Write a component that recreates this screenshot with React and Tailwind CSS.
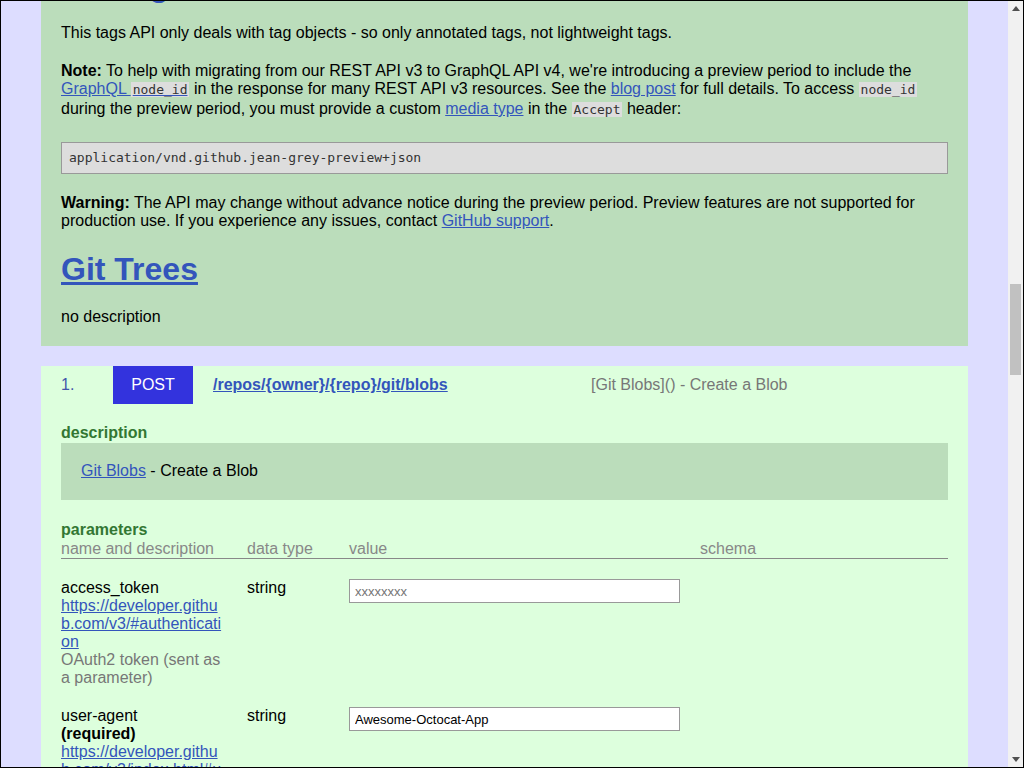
import React from 'react'

const link = 'text-[#3355bb] underline'
const code = "bg-[#dddddd] px-[2px] font-['DejaVu_Sans_Mono',monospace] text-[13px] leading-[20px] text-[#333333]"

const params = [
	{
		name: 'access_token',
		required: false,
		url: 'https://developer.github.com/v3/#authentication',
		note: 'OAuth2 token (sent as a parameter)',
		type: 'string',
		placeholder: 'xxxxxxxx',
		value: '',
	},
	{
		name: 'user-agent',
		required: true,
		url: 'https://developer.github.com/v3/index.html#user-agent-required',
		note: 'User Agent header',
		type: 'string',
		placeholder: '',
		value: 'Awesome-Octocat-App',
	},
]

function Arrow({ down }) {
	return (
		<div className="h-[15px] flex items-center justify-center">
			<svg width="8" height="5" viewBox="0 0 8 5">
				{down ? <path d="M0 0h8L4 5z" fill="#505050" /> : <path d="M0 5h8L4 0z" fill="#505050" />}
			</svg>
		</div>
	)
}

function ParamRow({ p }) {
	return (
		<div className="grid grid-cols-[186px_102px_351px_1fr] pt-[20px]">
			<div className="w-[165px]">
				<div>{p.name}</div>
				{p.required && <div className="font-bold">(required)</div>}
				<a href="#" className={link + ' block break-all'}>{p.url}</a>
				<div className="text-[#777777]">{p.note}</div>
			</div>
			<div>{p.type}</div>
			<div className="pr-[20px]">
				<input
					defaultValue={p.value}
					placeholder={p.placeholder}
					className="block h-[24px] w-[331px] border border-[#999999] bg-white px-[5px] text-[13px] text-black placeholder:text-[#757575] outline-none"
				/>
			</div>
			<div></div>
		</div>
	)
}

export default function App() {
	return (
		<div className="w-[1024px] h-[768px] border border-black flex overflow-hidden font-['Liberation_Sans',Arial,sans-serif] text-[16px] leading-[18px] text-black">
			{/* page */}
			<div className="flex-1 bg-[#ddddff] overflow-hidden px-[40px]">
				{/* Git Tags section (scrolled) */}
				<div className="bg-[#bbddbb] px-[20px] pb-[20px] flow-root">
					<h2 className="mt-[-34px] text-[32px] leading-[37px] font-bold">
						<a href="#" className={link}>Git Tags</a>
					</h2>
					<p className="mt-[20px]">This tags API only deals with tag objects - so only annotated tags, not lightweight tags.</p>
					<p className="mt-[20px]">
						<b>Note:</b> To help with migrating from our REST API v3 to GraphQL API v4, we're introducing a preview period to include the{' '}
						<a href="#" className={link}>GraphQL <code className={code}>node_id</code></a> in the response for many REST API v3 resources. See the{' '}
						<a href="#" className={link}>blog post</a> for full details. To access <code className={code}>node_id</code> during the preview period, you must provide a custom{' '}
						<a href="#" className={link}>media type</a> in the <code className={code}>Accept</code> header:
					</p>
					<pre className="mt-[22px] border border-[#999999] bg-[#dddddd] px-[7px] py-[7px] font-['DejaVu_Sans_Mono',monospace] text-[13px] leading-[16px] text-[#333333]">application/vnd.github.jean-grey-preview+json</pre>
					<p className="mt-[20px]">
						<b>Warning:</b> The API may change without advance notice during the preview period. Preview features are not supported for production use. If you experience any issues, contact{' '}
						<a href="#" className={link}>GitHub support</a>.
					</p>
					<h2 className="mt-[21px] text-[32px] leading-[37px] font-bold">
						<a href="#" className={link}>Git Trees</a>
					</h2>
					<p className="mt-[20px]">no description</p>
				</div>

				{/* endpoint */}
				<div className="mt-[20px] bg-[#ddffdd] px-[20px] pb-[20px]">
					<div className="flex items-center h-[38px]">
						<div className="w-[52px] text-[#4455aa]">1.</div>
						<div className="w-[80px] h-[38px] flex items-center justify-center bg-[#3333dd] text-white">POST</div>
						<a href="#" className={link + ' ml-[20px] w-[378px] font-bold'}>/repos/{'{owner}'}/{'{repo}'}/git/blobs</a>
						<div className="text-[#777777]">[Git Blobs]() - Create a Blob</div>
					</div>

					<div className="mt-[20px] font-bold text-[#337733]">description</div>
					<div className="mt-[1px] bg-[#bbddbb] px-[20px] pt-[19px] pb-[20px]">
						<a href="#" className={link}>Git Blobs</a> - Create a Blob
					</div>

					<div className="mt-[21px] font-bold text-[#337733]">parameters</div>
					<div className="mt-[1px] grid grid-cols-[186px_102px_351px_1fr] border-b border-[#888888] text-[#888888]">
						<div>name and description</div>
						<div>data type</div>
						<div>value</div>
						<div>schema</div>
					</div>
					{params.map(p => (
						<ParamRow key={p.name} p={p} />
					))}
				</div>
			</div>

			{/* scrollbar */}
			<div className="w-[15px] bg-[#f1f1f1] flex flex-col">
				<Arrow />
				<div className="h-[268px]"></div>
				<div className="mx-[2px] h-[91px] bg-[#c1c1c1]"></div>
				<div className="flex-1"></div>
				<Arrow down />
			</div>
		</div>
	)
}
